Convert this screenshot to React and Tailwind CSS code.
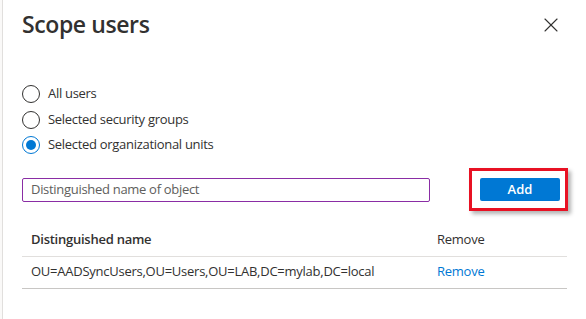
import { X } from 'lucide-react';

const options = [
  { label: 'All users', checked: false },
  { label: 'Selected security groups', checked: false },
  { label: 'Selected organizational units', checked: true },
];

const Radio = ({ checked }) => (
  <span
    className={`flex h-[18px] w-[18px] shrink-0 items-center justify-center rounded-full border ${checked ? 'border-[#0078d4]' : 'border-[#323130]'}`}
  >
    {checked && <span className="h-[10px] w-[10px] rounded-full bg-[#0078d4]" />}
  </span>
);

export default function App() {
  return (
    <div className="flex h-[319px] w-[586px] bg-white text-[#323130]" style={{ fontFamily: '"Open Sans", "Noto Sans", sans-serif' }}>
      {/* page behind the panel */}
      <div className="w-[3px] shrink-0 border-r border-[#e1dfdd] bg-[#faf9f8]" />

      <div className="flex flex-1 flex-col pl-[19px] pr-[19px]">
        <header className="flex h-[48px] items-center justify-between">
          <h1 className="text-[23px] font-semibold leading-none tracking-[-0.4px]">Scope users</h1>
          <button className="mr-[5px] mt-[2px] flex h-6 w-6 items-center justify-center text-[#323130]">
            <X className="h-6 w-6" strokeWidth={1.1} />
          </button>
        </header>

        <div className="mt-[37px] flex flex-col gap-[7.5px] tracking-[-0.3px]">
          {options.map((o) => (
            <label key={o.label} className="flex h-[18px] items-center gap-[8px] text-[13px]">
              <Radio checked={o.checked} />
              {o.label}
            </label>
          ))}
        </div>

        <div className="mt-[14px] flex items-center">
          <div className="flex h-[24px] w-[408px] items-center rounded-[2px] border border-[#8a2da5] px-[8px] text-[13px] tracking-[-0.3px] text-[#605e5c]">
            Distinguished name of object
          </div>
          <div className="ml-[39px] border-[3px] border-[#e81123] py-[7px] pl-[8px] pr-[5px] shadow-[3px_3px_4px_rgba(0,0,0,0.3)]">
            <button className="flex h-[23px] w-[80px] items-center justify-center rounded-[2px] bg-[#0078d4] text-[13px] font-semibold text-white">
              Add
            </button>
          </div>
        </div>

        <table className="mt-[13px] w-[545px] text-[13px] tracking-[-0.25px]">
          <thead>
            <tr className="border-b border-[#e1dfdd]">
              <th className="h-[32px] pl-[9px] text-left font-semibold">Distinguished name</th>
              <th className="w-[130px] text-left font-normal">Remove</th>
            </tr>
          </thead>
          <tbody>
            <tr className="border-b border-[#c8c6c4]">
              <td className="h-[32px] pl-[9px]">OU=AADSyncUsers,OU=Users,OU=LAB,DC=mylab,DC=local</td>
              <td className="text-[#0078d4]">Remove</td>
            </tr>
          </tbody>
        </table>
      </div>
    </div>
  );
}
